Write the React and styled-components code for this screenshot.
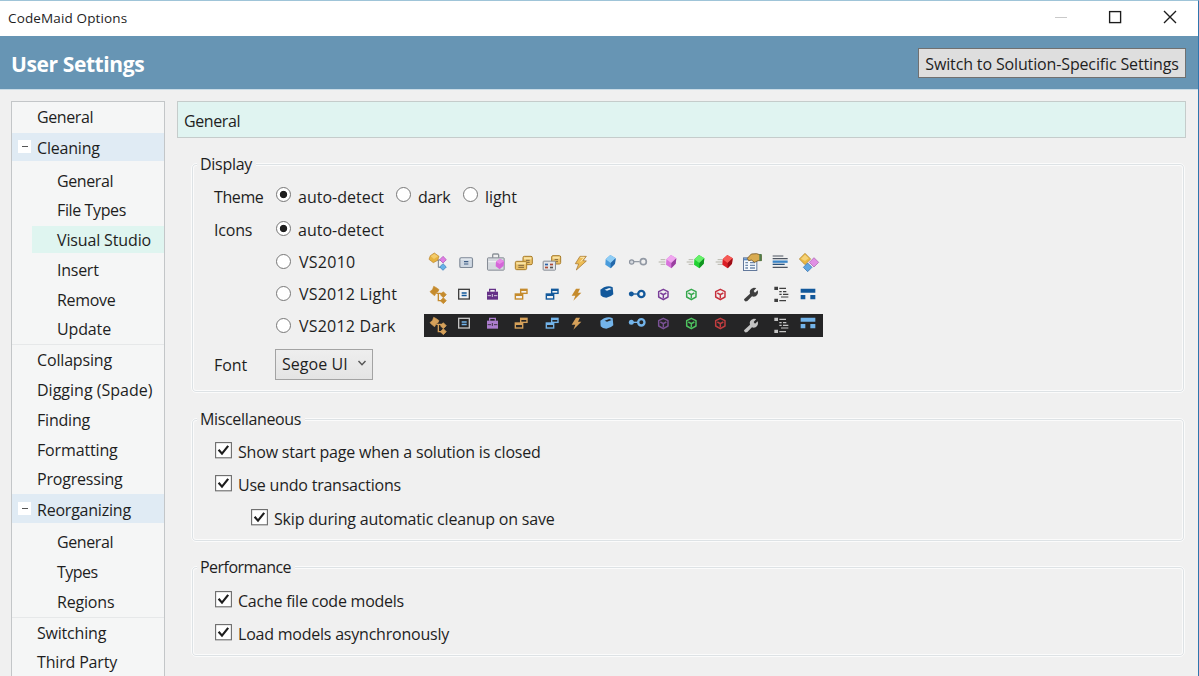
import React from 'react';
import styled, { createGlobalStyle, css } from 'styled-components';

const GlobalStyle = createGlobalStyle`
  * { box-sizing: border-box; }
  body {
    margin: 0;
    overflow: hidden;
    background: #f0f0f0;
    color: #1e1e1e;
    font: 16px/20px "Open Sans", "Noto Sans", sans-serif;
  }
`;

const Window = styled.div`
  display: flex;
  flex-direction: column;
  width: 1199px;
  height: 676px;
  overflow: hidden;
  border-top: 1px solid #9fc4d8;
  border-right: 1px solid #2e76ae;
  background: #f0f0f0;
`;

const Label = styled.span`
  white-space: nowrap;
  letter-spacing: ${(p) => p.$track ?? -0.2}px;
`;

/* Title bar */
const TitleBar = styled.header`
  display: flex;
  flex: none;
  justify-content: space-between;
  height: 35px;
  padding: 0 21px 0 8px;
  background: #fff;
`;
const Title = styled.h1`
  margin: 0;
  font-size: 13.5px;
  font-weight: 400;
  line-height: 34px;
  letter-spacing: 0.14px;
`;
const Caption = styled.div`
  display: flex;
  align-items: center;
  gap: 41px;
`;
const CaptionIcon = styled.svg`
  display: block;
  width: 14px;
  height: 14px;
  margin-bottom: 3px;
  fill: none;
  stroke: ${(p) => (p.$muted ? '#c9c9c9' : '#1c1c1c')};
  stroke-width: ${(p) => (p.$muted ? 1 : 1.35)};
`;

/* Banner */
const Banner = styled.div`
  display: flex;
  flex: none;
  align-items: center;
  justify-content: space-between;
  height: 54px;
  padding: 1px 12px 0 11px;
  border-bottom: 1px solid #c9dbe6;
  background: #6795b4;
`;
const BannerTitle = styled.h2`
  margin: 2px 0 0;
  color: #fff;
  font-size: 21px;
  font-weight: 700;
  line-height: 28px;
  letter-spacing: -0.4px;
`;
const SwitchButton = styled.button`
  width: 268px;
  height: 30px;
  padding: 1px 0 0;
  border: 1px solid #707070;
  background: #dedede;
  color: inherit;
  font: inherit;
  letter-spacing: -0.14px;
  white-space: nowrap;
`;

/* Body */
const Body = styled.div`
  display: flex;
  flex: 1;
  gap: 12px;
  min-height: 0;
  padding: 11px 12px 0 11px;
`;
const Sidebar = styled.nav`
  flex: none;
  width: 154px;
  height: 600px;
  border: 1px solid #c3c6c8;
  background: #f5f6f6;
`;
const NavItem = styled.div`
  height: ${(p) => (p.$first ? 30.5 : 29.75)}px;
  padding-left: 25px;
  line-height: 31.5px;
`;
const NavSection = styled.div`
  display: flex;
  align-items: center;
  gap: 6px;
  height: 28.75px;
  padding-left: 6px;
  background: #e0ebf4;
  line-height: 24px;

  ${Label} {
    padding-top: 3px;
  }
`;
const Collapse = styled.span`
  display: flex;
  align-items: center;
  justify-content: center;
  width: 13px;
  height: 13px;
  background: #fff;
  &::before {
    content: '';
    width: 6px;
    height: 1px;
    background: #555;
  }
`;
const NavChildren = styled.div`
  padding: 4.5px 0 0 20px;
  border-bottom: 1px solid #e6e8e9;
`;
const NavChild = styled.div`
  display: flex;
  align-items: center;
  height: 29.75px;
  padding-left: 25px;
  ${(p) =>
    p.$active &&
    css`
      background: linear-gradient(#dff5f0, #dff5f0) 0 1px / 100% 27px no-repeat;
    `}
`;

const Content = styled.main`
  flex: 1;
  min-width: 0;
`;
const PageHeading = styled.div`
  height: 37px;
  padding-left: 6px;
  border: 1px solid #c5cccb;
  background: #e0f4f1;
  line-height: 38px;
`;

const Group = styled.section`
  height: ${(p) => p.$height}px;
  margin: ${(p) => p.$gap}px 1px 0 14px;
  border: 1px solid #fbfbfb;
  border-radius: 5px;
  box-shadow: inset 0 0 0 1px #dde2e5, inset 0 0 0 2px #fbfbfb;
`;
const Legend = styled.div`
  width: max-content;
  height: 22px;
  margin: -11px 0 0 5px;
  padding: 0 4px 0 3px;
  background: #f0f0f0;
  line-height: 22px;
`;

const Field = styled.div`
  display: grid;
  grid-template-columns: 61px 1fr;
  height: ${(p) => p.$height}px;
  padding-left: 22px;
  line-height: ${(p) => p.$height}px;
`;
const Fields = styled.div`
  padding-top: 6px;
`;
const Options = styled.div`
  display: flex;
`;
const RadioLabel = styled.label`
  display: flex;
  gap: ${(p) => p.$gap ?? 7}px;
  width: ${(p) => p.$width}px;
  padding-left: 1px;
`;
const Radio = styled.span`
  display: block;
  flex: none;
  width: 15px;
  height: 15px;
  margin-top: ${(p) => p.$top ?? 7}px;
  border: 1px solid #777;
  border-radius: 50%;
  background: ${(p) => (p.$on ? 'radial-gradient(circle, #1f1f1f 3.3px, #fff 4.1px)' : '#fff')};
`;
const IconStrip = styled.div`
  display: grid;
  grid-template-columns: repeat(14, 28.55px);
  height: 23px;
  margin-top: ${(p) => p.$top}px;
  background: ${(p) => (p.$dark ? '#252526' : 'transparent')};
`;
const Glyph = styled.svg`
  display: block;
  width: 28.55px;
  height: 23px;
  overflow: visible;
`;
const Select = styled.div`
  display: flex;
  align-items: center;
  justify-content: space-between;
  width: 98px;
  height: 31px;
  margin-top: 7px;
  padding: 0 5px 0 6px;
  border: 1px solid #a3a3a3;
  background: linear-gradient(#eeeeee, #e4e4e4);
`;
const Chevron = styled.svg`
  width: 10px;
  height: 8px;
  margin-bottom: 3px;
  fill: none;
  stroke: #555;
  stroke-width: 1.4;
`;

const Checks = styled.div`
  padding-top: ${(p) => p.$top}px;
`;
const CheckRow = styled.label`
  display: flex;
  gap: 6px;
  height: 33.3px;
  padding-left: ${(p) => (p.$nested ? 59 : 23)}px;
  line-height: 34px;
`;
const Box = styled.svg`
  display: block;
  flex: none;
  width: 17px;
  height: 17px;
  margin-top: 7px;
`;

const Check = ({ children, nested, track }) => (
  <CheckRow $nested={nested}>
    <Box viewBox="0 0 17 17">
      <rect x="0.6" y="0.6" width="15.8" height="15.2" fill="#fff" stroke="#6a6a6a" strokeWidth="1.1" />
      <path d="M3.6 7.7 L7 11.6 L13.2 3.9" fill="none" stroke="#1d1d1d" strokeWidth="2.2" />
    </Box>
    <Label $track={track}>{children}</Label>
  </CheckRow>
);

const Option = ({ children, on, top, gap, width, track }) => (
  <RadioLabel $width={width} $gap={gap}>
    <Radio $on={on} $top={top} />
    <Label $track={track}>{children}</Label>
  </RadioLabel>
);

/* Icon drawings: each cell is 86 x 69 units, three units to a pixel. */
const Cell = ({ children, dy = 0 }) => (
  <Glyph viewBox="0 0 85.65 69">
    <g transform={`translate(0 ${dy})`}>{children}</g>
  </Glyph>
);

const Gem = ({ x = 42, light, mid, deep }) => (
  <g transform={`translate(${x} 12)`}>
    <path d="M15 0 L31 10 L29 26 L16 40 L0 29 L1 13 Z" fill={mid} />
    <path d="M15 0 L31 10 L16 24 L1 13 Z" fill={light} />
    <path d="M16 24 L31 10 L29 26 L16 40 Z" fill={deep} />
  </g>
);
const Speed = () => (
  <path d="M26 26 H40 M20 33 H40 M26 40 H40" stroke="#a9a89b" strokeWidth="2.5" />
);
const Diamond = ({ x, y, r, fill, stroke }) => (
  <path d={`M${x} ${y - r} L${x + r} ${y} L${x} ${y + r} L${x - r} ${y} Z`} fill={fill} stroke={stroke} strokeWidth="2" />
);
const GoldCard = ({ x, y, w }) => (
  <g>
    <rect x={x} y={y} width={w} height="25" rx="4" fill="#e9c068" stroke="#a97c2a" strokeWidth="3" />
    <rect x={x + 3} y={y + 3} width={w - 6} height="6" fill="#f8e3a4" />
    <path d={`M${x + 9} ${y + 12} H${x + w - 8} M${x + 9} ${y + 18} H${x + w - 8}`} stroke="#6f5836" strokeWidth="2.6" />
  </g>
);

const ClassicIcons = () => (
  <>
    <Cell>
      <path d="M38 27 H56 M43 27 V49 H56" fill="none" stroke="#777f8a" strokeWidth="3" />
      <path d="M31 6 L45 16 L41 28 L28 35 L15 25 L19 14 Z" fill="#e7b33f" stroke="#b98228" strokeWidth="2" />
      <path d="M31 8 L42 16 L30 24 L20 16 Z" fill="#f3cc6c" />
      <Diamond x={57} y={26} r={10} fill="#e07ee2" stroke="#a64fb5" />
      <Diamond x={57} y={48} r={10} fill="#67b2e8" stroke="#2f72b3" />
    </Cell>
    <Cell>
      <rect x="23.5" y="20.5" width="38" height="29" rx="4" fill="#cfd8e2" stroke="#7d8896" strokeWidth="3.4" />
      <path d="M26 24 H59" stroke="#f3f6f9" strokeWidth="3" />
      <path d="M36 32 H49 M36 39 H49" stroke="#3c5c85" strokeWidth="3.4" />
    </Cell>
    <Cell>
      <path d="M35 21 V12 Q35 9 38 9 H50 Q53 9 53 12 V21" fill="none" stroke="#8c9299" strokeWidth="4" />
      <rect x="19.5" y="20.5" width="50" height="37" rx="2" fill="#d5d9de" stroke="#868c95" strokeWidth="3" />
      <path d="M22 32 H67" stroke="#f5f6f7" strokeWidth="3" />
      <path d="M57 23 L69 31 L68 44 L56 55 L44 46 L45 32 Z" fill="#d566d8" />
      <path d="M57 23 L69 31 L56 39 L45 32 Z" fill="#e88be8" />
    </Cell>
    <Cell>
      <GoldCard x={42} y={16} w={28} />
      <GoldCard x={19} y={31} w={34} />
    </Cell>
    <Cell>
      <GoldCard x={41} y={14} w={27} />
      <rect x="15.5" y="30.5" width="37" height="27" rx="2" fill="#e3e5e8" stroke="#858b94" strokeWidth="3" />
      <rect x="21" y="38" width="9" height="5" fill="#2e62a6" />
      <rect x="21" y="47" width="9" height="5" fill="#b04b36" />
      <rect x="36" y="38" width="9" height="5" fill="#b04b36" />
      <rect x="36" y="47" width="9" height="5" fill="#555" />
    </Cell>
    <Cell>
      <path d="M42 16 L61 16 L51 29 L61 30 L31 57 L38 39 L28 38 Z" fill="#edbd56" stroke="#a97b35" strokeWidth="2.4" />
      <path d="M43 19 L55 19 L44 32" fill="none" stroke="#fbe7b5" strokeWidth="3" />
    </Cell>
    <Cell><Gem x={31} light="#8fcdf5" mid="#4a9cdc" deep="#2468aa" /></Cell>
    <Cell>
      <path d="M33 32 H50" stroke="#8d949f" strokeWidth="3.5" />
      <circle cx="26" cy="33" r="6.5" fill="#d5d9df" stroke="#8d949f" strokeWidth="3.5" />
      <circle cx="61" cy="32" r="9" fill="#f0f0f0" stroke="#9299a4" strokeWidth="5" />
    </Cell>
    <Cell><Speed /><Gem light="#f0a6ef" mid="#d872dc" deep="#98409f" /></Cell>
    <Cell><Speed /><Gem light="#66f06a" mid="#22d232" deep="#119421" /></Cell>
    <Cell><Speed /><Gem x={40} light="#f65a55" mid="#dc1d25" deep="#9c0d16" /></Cell>
    <Cell>
      <rect x="16.5" y="20.5" width="40" height="38" fill="#f4f8fc" stroke="#62789b" strokeWidth="3" />
      <path d="M18 25 H55" stroke="#5b8cc8" strokeWidth="6" />
      <path d="M22 35 H30 M22 43 H30 M22 51 H30 M36 35 H51 M36 43 H51 M36 51 H51" stroke="#7089ab" strokeWidth="4" />
      <path d="M28 22 L40 9 L56 8 L70 13 V29 H60 L50 34 L40 27 L32 29 Z" fill="#d9ab50" stroke="#7c5a24" strokeWidth="2.5" />
      <rect x="64" y="9" width="7" height="21" fill="#4f7c4b" />
    </Cell>
    <Cell>
      <path d="M20 15 H52 M20 23 H65 M20 49 H65" stroke="#4d5561" strokeWidth="3.4" />
      <path d="M20 32 H65" stroke="#3b86c8" strokeWidth="7" />
      <path d="M20 40 H56" stroke="#29527c" strokeWidth="4" />
    </Cell>
    <Cell>
      <Diamond x={30} y={24} r={17} fill="#eab944" stroke="#a87a28" />
      <path d="M30 11 L41 22 L30 30 L18 23 Z" fill="#f5d277" />
      <Diamond x={57} y={34} r={14} fill="#e08fe4" stroke="#a259ab" />
      <Diamond x={38} y={49} r={13} fill="#5fa6e2" stroke="#2c68a6" />
    </Cell>
  </>
);

const Cards = ({ x, color, fill }) => (
  <g stroke={color} strokeWidth="4.2">
    <rect x={x + 16} y="19" width="19" height="12" fill={fill} />
    <rect x={x} y="33" width="22" height="15" fill={fill} />
    <path d={`M${x + 16} 21 H${x + 35} M${x} 36 H${x + 22}`} strokeWidth="6" />
  </g>
);
const Cube = ({ color }) => (
  <path
    d="M34 19 L48 26 V42 L34 50 L20 42 V26 Z M25 30 L34 35 L43 30 M34 35 V46"
    fill="none" stroke={color} strokeWidth="4.4" strokeLinejoin="round"
  />
);

const FlatIcons = ({ c, dy }) => (
  <>
    <Cell>
      <path d="M37 31 H58 M43 31 V53 H58" fill="none" stroke={c.gold} strokeWidth="4" />
      <path d="M18 26 L26 19 L29 10 L37 14 L45 20 L41 27 L36 30 L32 38 L25 33 Z" fill={c.gold} stroke={c.gold} strokeWidth="2" />
      <Diamond x={58} y={35} r={9} fill={c.gold} stroke={c.gold} />
      <Diamond x={58} y={53} r={9} fill={c.gold} stroke={c.gold} />
    </Cell>
    <Cell dy={dy}>
      <rect x="20" y="19" width="32" height="29" fill={c.pane} stroke={c.ink} strokeWidth="4" />
      <path d="M29 30 H44 M29 37.5 H44" stroke={c.blue} strokeWidth="4" />
    </Cell>
    <Cell dy={dy}>
      <path d="M26 26 V19 H43 V26" fill="none" stroke={c.purple} strokeWidth="4" />
      <path d="M18 26 H51 V50 H18 Z" fill={c.purple} />
      <path d="M20 38 H30 M39 38 H49 M34 33 V42" stroke={c.pane} strokeWidth="2.4" />
    </Cell>
    <Cell dy={dy}><Cards x={19} color={c.gold} fill={c.pane} /></Cell>
    <Cell dy={dy}><Cards x={25} color={c.blue} fill={c.pane} /></Cell>
    <Cell dy={dy}><path d="M30 17 H42 L36 29 H46 L22 53 L28 38 H17 Z" fill={c.gold} /></Cell>
    <Cell dy={c.boxDy}>
      <path d="M16 20 L27 13 Q42 7 53 13 L55 34 Q48 42 34 44 Q22 44 17 37 Z" fill={c.blue} />
      <path d="M29 20 L43 15 L50 18 L36 23 Z" fill={c.shine} />
    </Cell>
    <Cell dy={dy - (dy ? 2 : 0)}>
      <path d="M28 33 H46" stroke={c.blue} strokeWidth="4" />
      <circle cx="25" cy="33" r="7.5" fill={c.blue} />
      <circle cx="55" cy="33" r="9.5" fill={c.pane} stroke={c.blue} strokeWidth="7" />
    </Cell>
    <Cell dy={dy}><Cube color={c.violet} /></Cell>
    <Cell dy={dy}><Cube color={c.green} /></Cell>
    <Cell dy={dy}><Cube color={c.red} /></Cell>
    <Cell>
      <path d="M18 49 L36 32 Q32 18 47 14 L55 15 L47 24 L51 29 L59 22 Q63 33 53 40 Q47 42 42 40 L28 54 Q19 58 18 49 Z" fill={c.ink} />
    </Cell>
    <Cell>
      <path d="M25 11 H36 V21 H25 Z M25 47 H36 V57 H25 Z" fill={c.ink} />
      <path d="M40 16 H60 M40 26 H47 M51 26 H61 M40 34 H47 M51 34 H67 M45 42 H67 M40 53 H60" stroke={c.ink} strokeWidth="3.4" />
    </Cell>
    <Cell dy={dy}>
      <path d="M17 17 H61 V29 H17 Z M17 36 H31 V49 H17 Z M46 36 H61 V49 H46 Z" fill={c.blue} />
    </Cell>
  </>
);

const LIGHT = {
  gold: '#c58b2d', ink: '#3f3f3f', blue: '#12589b', purple: '#653087', violet: '#7a3d99',
  green: '#35a84c', red: '#c72f3b', pane: '#f3f3f3', shine: '#e2eef7', boxDy: 0,
};
const DARK = {
  gold: '#d6a15a', ink: '#c4c4c4', blue: '#73b4ea', purple: '#ac7dce', violet: '#7b5297',
  green: '#4ec45f', red: '#c23d3f', pane: '#252526', shine: '#252526', boxDy: 0,
};

const Section = ({ title, items, track }) => (
  <>
    <NavSection>
      <Collapse />
      <Label $track={track}>{title}</Label>
    </NavSection>
    <NavChildren>
      {items.map(([name, t, active]) => (
        <NavChild key={name} $active={active}>
          <Label $track={t}>{name}</Label>
        </NavChild>
      ))}
    </NavChildren>
  </>
);

export default function App() {
  return (
    <>
      <GlobalStyle />
      <Window>
        <TitleBar>
          <Title>CodeMaid Options</Title>
          <Caption>
            <CaptionIcon $muted viewBox="0 0 14 14"><path d="M2 7.5 H14" /></CaptionIcon>
            <CaptionIcon viewBox="0 0 14 14"><rect x="1.6" y="1.6" width="11" height="11" /></CaptionIcon>
            <CaptionIcon viewBox="0 0 14 14"><path d="M1 1 L13 13 M13 1 L1 13" /></CaptionIcon>
          </Caption>
        </TitleBar>
        <Banner>
          <BannerTitle>User Settings</BannerTitle>
          <SwitchButton>Switch to Solution-Specific Settings</SwitchButton>
        </Banner>
        <Body>
          <Sidebar>
            <NavItem $first><Label $track={-0.4}>General</Label></NavItem>
            <Section
              title="Cleaning"
              track={-0.2}
              items={[
                ['General', -0.4],
                ['File Types', -0.38],
                ['Visual Studio', -0.14, true],
                ['Insert', -0.26],
                ['Remove', -0.3],
                ['Update', -0.14],
              ]}
            />
            <NavItem><Label $track={-0.16}>Collapsing</Label></NavItem>
            <NavItem><Label $track={0}>Digging (Spade)</Label></NavItem>
            <NavItem><Label $track={-0.2}>Finding</Label></NavItem>
            <NavItem><Label $track={-0.14}>Formatting</Label></NavItem>
            <NavItem><Label $track={-0.2}>Progressing</Label></NavItem>
            <Section
              title="Reorganizing"
              track={-0.22}
              items={[['General', -0.4], ['Types', -0.5], ['Regions', -0.18]]}
            />
            <NavItem><Label $track={-0.2}>Switching</Label></NavItem>
            <NavItem><Label $track={-0.17}>Third Party</Label></NavItem>
          </Sidebar>
          <Content>
            <PageHeading><Label $track={-0.4}>General</Label></PageHeading>

            <Group $height={230} $gap={25}>
              <Legend><Label $track={-0.29}>Display</Label></Legend>
              <Fields>
                <Field $height={33}>
                  <Label $track={-0.4}>Theme</Label>
                  <Options>
                    <Option on top={6} width={120} track={0}>auto-detect</Option>
                    <Option top={6} width={67} track={-0.35}>dark</Option>
                    <Option top={6} track={-0.06}>light</Option>
                  </Options>
                </Field>
                <Field $height={32}>
                  <Label $track={-0.2}>Icons</Label>
                  <Option on track={0}>auto-detect</Option>
                </Field>
                <Field $height={32}>
                  <span />
                  <Options>
                    <Option width={148.5} top={8} gap={8} track={0.26}>VS2010</Option>
                    <IconStrip $top={5}><ClassicIcons /></IconStrip>
                  </Options>
                </Field>
                <Field $height={32}>
                  <span />
                  <Options>
                    <Option width={148.5} top={8} gap={8} track={0.22}>VS2012 Light</Option>
                    <IconStrip $top={4.5}><FlatIcons c={LIGHT} dy={0} /></IconStrip>
                  </Options>
                </Field>
                <Field $height={32}>
                  <span />
                  <Options>
                    <Option width={148.5} top={8} gap={8} track={0.2}>VS2012 Dark</Option>
                    <IconStrip $dark $top={4}><FlatIcons c={DARK} dy={-6} /></IconStrip>
                  </Options>
                </Field>
                <Field $height={47}>
                  <Label $track={-0.1}>Font</Label>
                  <Options>
                    <Select>
                      <Label $track={0.05}>Segoe UI</Label>
                      <Chevron viewBox="0 0 10 8"><path d="M1.5 2 L5 5.8 L8.5 2" /></Chevron>
                    </Select>
                  </Options>
                </Field>
              </Fields>
            </Group>

            <Group $height={124} $gap={25}>
              <Legend><Label $track={-0.34}>Miscellaneous</Label></Legend>
              <Checks $top={5}>
                <Check track={-0.18}>Show start page when a solution is closed</Check>
                <Check track={-0.22}>Use undo transactions</Check>
                <Check nested track={-0.19}>Skip during automatic cleanup on save</Check>
              </Checks>
            </Group>

            <Group $height={91} $gap={24}>
              <Legend><Label $track={-0.53}>Performance</Label></Legend>
              <Checks $top={6}>
                <Check track={-0.24}>Cache file code models</Check>
                <Check track={-0.22}>Load models asynchronously</Check>
              </Checks>
            </Group>
          </Content>
        </Body>
      </Window>
    </>
  );
}
